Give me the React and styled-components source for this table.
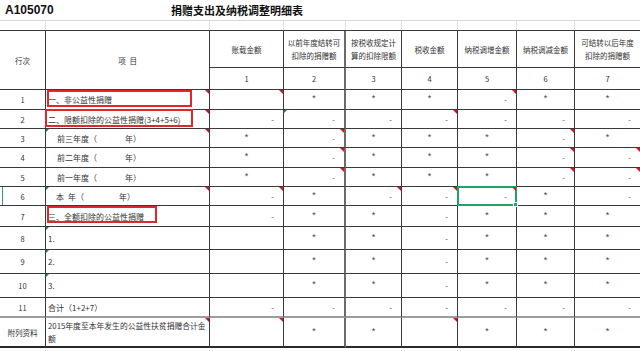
import React from 'react'
import styled, { createGlobalStyle, css } from 'styled-components'

const GlobalStyle = createGlobalStyle`
  html, body {
    margin: 0;
    padding: 0;
    background: #fff;
  }
  body {
    overflow: hidden;
    font-family: "Noto Sans CJK SC", "Noto Sans", sans-serif;
    color: #333;
  }
`

const COLS = '46px 164px 74px 62px 56px 56px 59px 58px 66px'
const LINE = '#3a3a3a'

const Sheet = styled.div`
  width: 640px;
  height: 351px;
  overflow: hidden;
  display: flex;
  flex-direction: column;
`

const TitleBar = styled.div`
  flex: none;
  height: 20px;
  display: grid;
  grid-template-columns: 171px 1fr;
  align-items: center;
  border-bottom: 1px solid #dadada;
`

const Code = styled.div`
  padding-left: 5px;
  font-family: "Liberation Sans", Arial, sans-serif;
  font-weight: bold;
  font-size: 12px;
  color: #111;
`

const Heading = styled.div`
  font-size: 11px;
  font-weight: bold;
  color: #111;
`

const Strip = styled.div`
  flex: none;
  height: ${props => props.$h}px;
  display: grid;
  grid-template-columns: ${COLS};
`

const GridCell = styled.div`
  border-right: 1px solid #e2e2e2;
`

const Table = styled.div`
  flex: none;
  display: grid;
  grid-template-columns: ${COLS};
  grid-template-rows: 37px 22px 20px 19px 19px 20px 19px 19px 21px 23px 24px 24px 20px 30px;
  border-top: 1px solid ${LINE};
`

const bottomLine = {
  gray: '2px solid #9c9c9c',
  heavy: '2px solid #2a2a2a',
}

const Cell = styled.div`
  position: relative;
  box-sizing: border-box;
  display: flex;
  align-items: center;
  justify-content: ${props => (props.$align === 'left' ? 'flex-start' : props.$align === 'right' ? 'flex-end' : 'center')};
  padding: ${props => (props.$align === 'left' ? `0 0 0 ${props.$indent || 2}px` : props.$align === 'right' ? '0 9px 0 0' : '0 3px')};
  border-right: ${props => (props.$thick ? '2px solid #6a6a6a' : `1px solid ${LINE}`)};
  border-bottom: ${props => bottomLine[props.$bottom] || `1px solid ${LINE}`};
  font-size: ${props => props.$size || 7.5}px;
  line-height: 13px;
  text-align: ${props => (props.$align === 'left' ? 'left' : 'center')};
  color: #333;
  white-space: pre-wrap;
  ${props => props.$span && css`grid-row: span ${props.$span};`}
  ${props => props.$active && css`
    background: linear-gradient(to right, transparent 2px, #2e9e6a 2px, #2e9e6a 3px, transparent 3px);
  `}
  ${props => props.$note && css`
    &::after {
      content: '';
      position: absolute;
      top: 0;
      right: 0;
      border-top: 4px solid #d8121b;
      border-left: 4px solid transparent;
      z-index: 3;
    }
  `}
  ${props => props.$flag && css`
    &::before {
      content: '';
      position: absolute;
      top: 0;
      left: 0;
      border-top: 3px solid #1d8a2a;
      border-right: 3px solid transparent;
    }
  `}
`

const Star = styled.span`
  font-family: "Liberation Sans", Arial, sans-serif;
  font-size: 9px;
  color: #444;
  margin-top: -2px;
`

const Dash = styled.span`
  font-family: "Liberation Sans", Arial, sans-serif;
  font-size: 8px;
  color: #555;
`

const Gap = styled.span`
  display: inline-block;
  width: ${props => props.$w}px;
`

const RedBox = styled.div`
  position: absolute;
  box-sizing: border-box;
  left: ${props => props.$l}px;
  top: ${props => props.$t}px;
  width: ${props => props.$w}px;
  height: ${props => props.$h}px;
  border: 2px solid #e4262c;
  pointer-events: none;
`

const Selection = styled.div`
  position: absolute;
  top: -1px;
  left: -1px;
  right: -1px;
  bottom: -1px;
  border: 2px solid #21a366;
  z-index: 2;

  &::after {
    content: '';
    position: absolute;
    right: -3px;
    bottom: -3px;
    width: 3px;
    height: 3px;
    background: #21a366;
    border: 1px solid #fff;
  }
`

const headers = [
  '账载金额',
  '以前年度结转可扣除的捐赠额',
  '按税收规定计算的扣除限额',
  '税收金额',
  '纳税调增金额',
  '纳税调减金额',
  '可结转以后年度扣除的捐赠额',
]

const yearLabel = word => (
  <>
    {word}（<Gap $w={28} />年）
  </>
)

const rows = [
  { no: '1', label: '一、非公益性捐赠', box: { l: 1, t: 0, w: 145, h: 17 }, notes: [0, 1, 5], vals: ['', '*', '*', '*', '-', '*', '*'] },
  { no: '2', label: '二、限额扣除的公益性捐赠(3+4+5+6)', box: { l: -1, t: -1, w: 148, h: 18 }, notes: [0, 4], flags: [2], vals: ['-', '-', '-', '-', '-', '-', '-'] },
  { no: '3', label: yearLabel('前三年度'), indent: 11, notes: [0, 2, 6], flags: [0], vals: ['*', '-', '*', '*', '*', '-', '*'] },
  { no: '4', label: yearLabel('前二年度'), indent: 11, notes: [2, 6, 7], vals: ['*', '-', '*', '*', '*', '-', '-'] },
  { no: '5', label: yearLabel('前一年度'), indent: 11, notes: [2, 6, 7], vals: ['*', '-', '*', '*', '*', '-', '-'] },
  {
    no: '6',
    label: (
      <>
        本<Gap $w={4} />年（<Gap $w={35} />年）
      </>
    ),
    indent: 10,
    active: true,
    selected: 5,
    notes: [0, 1, 3, 4, 5],
    flags: [0],
    vals: ['-', '*', '-', '-', '-', '*', '-'],
  },
  { no: '7', label: '三、全额扣除的公益性捐赠', box: { l: 1, t: 0, w: 110, h: 17 }, vals: ['-', '*', '*', '-', '*', '*', '*'] },
  { no: '8', label: '1.', flags: [0], vals: ['', '*', '*', '-', '*', '*', '*'] },
  { no: '9', label: '2.', flags: [0], vals: ['', '*', '*', '-', '*', '*', '*'] },
  { no: '10', label: '3.', flags: [0], vals: ['', '*', '*', '-', '*', '*', '*'] },
  { no: '11', label: '合计（1+2+7）', bottom: 'gray', vals: ['-', '-', '-', '-', '-', '-', '-'] },
  {
    no: '附列资料',
    label: (
      <span>
        2015年度至本年发生的公益性扶贫捐赠合计金
        <br />
        额
      </span>
    ),
    size: 7.8,
    bottom: 'heavy',
    notes: [0, 1, 4],
    vals: ['', '*', '*', '', '*', '*', '*'],
  },
]

const Value = ({ v }) => {
  if (v === '*') return <Star>*</Star>
  if (v === '-') return <Dash>-</Dash>
  return null
}

const BodyRow = ({ row }) => {
  const notes = row.notes || []
  const flags = row.flags || []
  return (
    <>
      <Cell $bottom={row.bottom} $active={row.active}>{row.no}</Cell>
      <Cell
        $align="left"
        $size={row.size || 8}
        $indent={row.indent}
        $bottom={row.bottom}
        $note={notes.includes(0)}
        $flag={flags.includes(0)}
      >
        {row.label}
        {row.box && <RedBox $l={row.box.l} $t={row.box.t} $w={row.box.w} $h={row.box.h} />}
      </Cell>
      {row.vals.map((v, i) => (
        <Cell
          key={i}
          $align={v === '-' ? 'right' : 'center'}
          $bottom={row.bottom}
          $thick={i === 1}
          $note={notes.includes(i + 1)}
          $flag={flags.includes(i + 1)}
        >
          <Value v={v} />
          {row.selected === i + 1 && <Selection />}
        </Cell>
      ))}
    </>
  )
}

const App = () => {
  return (
    <Sheet>
      <GlobalStyle />
      <TitleBar>
        <Code>A105070</Code>
        <Heading>捐赠支出及纳税调整明细表</Heading>
      </TitleBar>
      <Strip $h={9}>
        {Array.from({ length: 9 }).map((_, i) => <GridCell key={i} />)}
      </Strip>
      <Table>
        <Cell $span={2}>行次</Cell>
        <Cell $span={2}>项{'\u2002'}目</Cell>
        {headers.map((h, i) => (
          <Cell key={h} $thick={i === 1}>{h}</Cell>
        ))}
        {headers.map((h, i) => (
          <Cell key={i} $thick={i === 1}>{i + 1}</Cell>
        ))}
        {rows.map(row => (
          <BodyRow key={row.no} row={row} />
        ))}
      </Table>
    </Sheet>
  )
}

export default App
